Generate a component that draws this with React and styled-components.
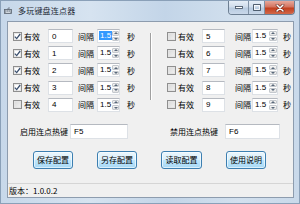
import React from 'react';
import styled, { createGlobalStyle } from 'styled-components';

const Global = createGlobalStyle`
  html, body {
    margin: 0;
    padding: 0;
    width: 300px;
    height: 204px;
    overflow: hidden;
    background: #fff;
  }
  * { box-sizing: border-box; }
`;

const Frame = styled.div`
  width: 300px;
  height: 204px;
  display: flex;
  flex-direction: column;
  background: linear-gradient(90deg, #c7d8ea 0%, #d6e3f0 30%, #c3d5e8 55%, #d2e0ee 80%, #c9d9ea 100%);
  border: 1px solid #8aa0b8;
  font-family: "Liberation Sans", "Noto Sans CJK SC", sans-serif;
  font-size: 8px;
  color: #000;
`;

const TitleBar = styled.div`
  height: 20px;
  display: flex;
  align-items: flex-start;
  padding: 0 4px 0 3px;
`;

const TitleLeft = styled.div`
  display: flex;
  align-items: center;
  gap: 6px;
  height: 19px;
`;

const TitleText = styled.span`
  font-family: "Noto Sans CJK SC", sans-serif;
  font-size: 8px;
  color: #1e2a36;
  letter-spacing: 0.2px;
`;

const Caption = styled.div`
  margin-left: auto;
  display: flex;
  height: 14px;
  border: 1px solid #6d7f93;
  border-top: none;
  border-radius: 0 0 4px 4px;
  overflow: hidden;
`;

const CapButton = styled.div`
  width: ${p => p.$w}px;
  height: 100%;
  display: flex;
  align-items: center;
  justify-content: center;
  background: ${p => p.$close
    ? 'linear-gradient(180deg, #e7a89b 0%, #d4745f 45%, #c2401f 55%, #d2684a 100%)'
    : 'linear-gradient(180deg, #e6eef7 0%, #cfdceb 45%, #b8cbe0 55%, #c9d8ea 100%)'};
  border-left: ${p => p.$first ? 'none' : '1px solid #7f91a5'};
`;

const Client = styled.div`
  flex: 1;
  margin: 0 5px 5px 6px;
  border: 1px solid #8d9cae;
  background: #f0f0f0;
  display: flex;
  flex-direction: column;
`;

const Main = styled.div`
  display: flex;
  padding: 7px 0 0 5px;
`;

const Group = styled.div`
  display: grid;
  grid-template-columns: ${p => p.$cols};
  grid-auto-rows: 14px;
  row-gap: 3.2px;
  align-items: center;
`;

const Separator = styled.div`
  width: 2px;
  height: 67px;
  margin: 4px ${p => p.$right}px 0 ${p => p.$left}px;
  border-left: 1px solid #a0a0a0;
  border-right: 1px solid #ffffff;
`;

const CheckWrap = styled.label`
  display: flex;
  align-items: center;
  gap: 2px;
  font-family: "Noto Sans CJK SC", sans-serif;
  font-size: 8px;
`;

const Box = styled.span`
  width: 9px;
  height: 9px;
  border: 1px solid #8f8f8f;
  background: ${p => p.$checked
    ? '#ffffff'
    : 'linear-gradient(135deg, #d8d8d8 0%, #f2f2f2 100%)'};
  box-shadow: inset 0 0 0 1px ${p => p.$checked ? '#e8e8e8' : '#e3e3e3'};
  display: flex;
  align-items: center;
  justify-content: center;
`;

const Text = styled.span`
  font-family: "Noto Sans CJK SC", sans-serif;
  font-size: 8px;
  white-space: nowrap;
`;

const Field = styled.div`
  width: ${p => p.$w}px;
  height: ${p => p.$h || 14}px;
  background: #fff;
  border: 1px solid #dde1e6;
  border-top-color: #b5b9c0;
  display: flex;
  align-items: center;
  padding-left: 3px;
  font-size: 8px;
`;

const Spin = styled.div`
  width: ${p => p.$w}px;
  height: 14px;
  background: #fff;
  border: 1px solid #dde1e6;
  border-top-color: #b5b9c0;
  display: flex;
  align-items: center;
  padding-left: 1px;
`;

const SpinValue = styled.span`
  flex: 1;
  font-size: 8px;
  line-height: 10px;
  span {
    padding: 0 1px;
    background: ${p => p.$selected ? '#3399ff' : 'transparent'};
    color: ${p => p.$selected ? '#fff' : '#000'};
  }
`;

const Arrows = styled.div`
  width: 8px;
  height: 100%;
  display: flex;
  flex-direction: column;
  gap: 1px;
  padding: 1px 0;
`;

const ArrowBtn = styled.div`
  flex: 1;
  border: 1px solid #c4c8cd;
  border-radius: 1px;
  background: linear-gradient(180deg, #f6f6f6, #e2e2e2);
  display: flex;
  align-items: center;
  justify-content: center;
`;

const HotkeyRow = styled.div`
  display: flex;
  align-items: center;
  margin-top: 12px;
  height: 15px;
`;

const HotLabel = styled(Text)`
  width: ${p => p.$w}px;
  text-align: right;
  margin-right: ${p => p.$mr}px;
`;

const ButtonRow = styled.div`
  display: flex;
  gap: 24px;
  padding-left: 25px;
  margin-top: 12px;
`;

const Button = styled.button`
  width: ${p => p.$w || 40}px;
  height: 18px;
  padding: 0;
  border: 1px solid #3c7fb1;
  border-radius: 3px;
  background: linear-gradient(180deg, #eaf6fd 0%, #d9f0fc 48%, #bee6fd 52%, #a7d9f5 100%);
  box-shadow: inset 0 0 0 1px rgba(255, 255, 255, 0.6);
  font-family: "Noto Sans CJK SC", sans-serif;
  font-size: 8px;
  color: #000;
`;

const StatusBar = styled.div`
  margin-top: auto;
  height: 14px;
  border-top: 1px solid #d5d5d5;
  display: flex;
  align-items: center;
  padding-left: 1px;
  font-size: 8px;
  font-family: "Noto Sans CJK SC", sans-serif;
`;

const CheckMark = () => (
  <svg width="7" height="7" viewBox="0 0 7 7">
    <path d="M0.8 3.6 L2.7 5.6 L6.2 1" fill="none" stroke="#3a4f6e" strokeWidth="1.3" />
  </svg>
);

const Up = () => (
  <svg width="4" height="2" viewBox="0 0 4 2"><path d="M0 2 L2 0 L4 2 Z" fill="#59687a" /></svg>
);
const Down = () => (
  <svg width="4" height="2" viewBox="0 0 4 2"><path d="M0 0 L4 0 L2 2 Z" fill="#59687a" /></svg>
);

const KeyIcon = () => (
  <svg width="8" height="7" viewBox="0 0 8 7">
    <rect x="0.5" y="2.5" width="7" height="4" fill="#9aa4ae" stroke="#5e6873" strokeWidth="0.8" />
    <path d="M2 4h1M4 4h1M6 4h0.6M2 5.5h4" stroke="#e8ecf0" strokeWidth="0.7" />
    <path d="M4 2.5 V1 H6" stroke="#5e6873" strokeWidth="0.7" fill="none" />
  </svg>
);

const ClickRow = ({ checked, value, spinW, textW, selected }) => (
  <>
    <CheckWrap>
      <Box $checked={checked}>{checked && <CheckMark />}</Box>
      有效
    </CheckWrap>
    <Field $w={textW}>{value}</Field>
    <Text>间隔</Text>
    <Spin $w={spinW}>
      <SpinValue $selected={selected}><span>1.5</span></SpinValue>
      <Arrows>
        <ArrowBtn><Up /></ArrowBtn>
        <ArrowBtn><Down /></ArrowBtn>
      </Arrows>
    </Spin>
    <Text>秒</Text>
  </>
);

const left = [
  { checked: true, value: '0', selected: true },
  { checked: true, value: '1' },
  { checked: true, value: '2' },
  { checked: true, value: '3' },
  { checked: false, value: '4' },
];
const right = ['5', '6', '7', '8', '9'];

export default function App() {
  return (
    <>
      <Global />
      <Frame>
        <TitleBar>
          <TitleLeft>
            <KeyIcon />
            <TitleText>多玩键盘连点器</TitleText>
          </TitleLeft>
          <Caption>
            <CapButton $w={19} $first>
              <svg width="8" height="3" viewBox="0 0 8 3">
                <rect x="0.5" y="0.5" width="7" height="2" fill="#fff" stroke="#3b4a5c" strokeWidth="0.8" />
              </svg>
            </CapButton>
            <CapButton $w={16}>
              <svg width="8" height="7" viewBox="0 0 8 7">
                <rect x="0.6" y="0.6" width="6.8" height="5.8" fill="none" stroke="#3b4a5c" strokeWidth="0.9" />
                <rect x="1.5" y="1.5" width="5" height="4" fill="none" stroke="#fff" strokeWidth="0.8" />
              </svg>
            </CapButton>
            <CapButton $w={30} $close>
              <svg width="10" height="8" viewBox="0 0 10 8">
                <path d="M2 1 L8 7 M8 1 L2 7" stroke="#5a1a10" strokeWidth="2.6" strokeLinecap="round" />
                <path d="M2 1 L8 7 M8 1 L2 7" stroke="#fff" strokeWidth="1.6" strokeLinecap="round" />
              </svg>
            </CapButton>
          </Caption>
        </TitleBar>
        <Client>
          <Main>
            <Group $cols="35px 30px 19px 30px 10px">
              {left.map((r, i) => (
                <ClickRow key={i} {...r} textW={25} spinW={23} />
              ))}
            </Group>
            <Separator $left={13} $right={15} />
            <Group $cols="35px 33px 17px 31px 10px">
              {right.map(v => (
                <ClickRow key={v} checked={false} value={v} textW={23} spinW={26} />
              ))}
            </Group>
          </Main>
          <HotkeyRow>
            <HotLabel $w={60} $mr={2}>启用连点热键</HotLabel>
            <Field $w={58} $h={15}>F5</Field>
            <HotLabel $w={90} $mr={7}>禁用连点热键</HotLabel>
            <Field $w={55} $h={15}>F6</Field>
          </HotkeyRow>
          <ButtonRow>
            <Button>保存配置</Button>
            <Button>另存配置</Button>
            <Button $w={41}>读取配置</Button>
            <Button>使用说明</Button>
          </ButtonRow>
          <StatusBar>版本：1.0.0.2</StatusBar>
        </Client>
      </Frame>
    </>
  );
}
